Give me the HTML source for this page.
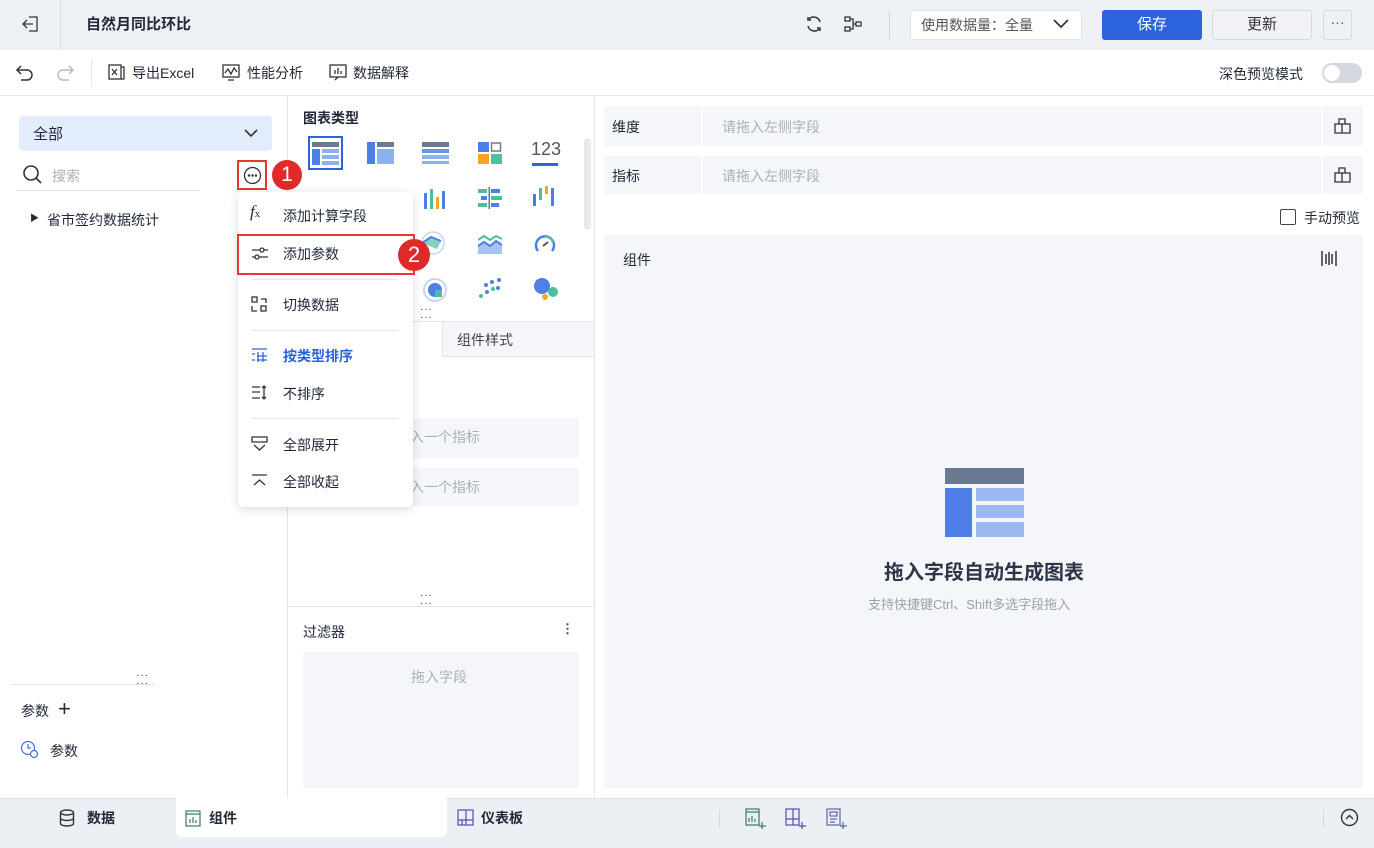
<!DOCTYPE html>
<html><head><meta charset="utf-8"><style>
*{box-sizing:border-box;margin:0;padding:0}
body{width:1374px;height:848px;position:relative;overflow:hidden;font-family:"Liberation Sans","Noto Sans CJK SC",sans-serif;font-size:14px;color:#222a3a;background:#fff}
.a{position:absolute}
.t{position:absolute;white-space:nowrap;margin-top:-2px}
svg{position:absolute}
</style></head><body>
<!-- top bar -->
<div class="a" style="left:0;top:0;width:1374px;height:50px;background:#edf0f5"></div>
<div class="a" style="left:60px;top:0;width:1px;height:50px;background:#d9dde4"></div>
<svg style="left:21px;top:14px" width="20" height="20" viewBox="0 0 20 20" fill="none" stroke="#333" stroke-width="1.3"><path d="M8 3h8v14H8M2 10h10M6 6l-4 4 4 4"/></svg>
<div class="t" style="left:86px;top:15px;font-size:15px;font-weight:bold">自然月同比环比</div>
<svg style="left:804px;top:14px" width="20" height="20" viewBox="0 0 20 20" fill="none" stroke="#333" stroke-width="1.5"><path d="M16 8a6.5 6.5 0 0 0-11-3M4 12a6.5 6.5 0 0 0 11 3"/><path d="M4 3v3h3M16 17v-3h-3"/></svg>
<svg style="left:843px;top:15px" width="20" height="18" viewBox="0 0 20 18" fill="none" stroke="#333" stroke-width="1.3"><rect x="2" y="2" width="5" height="4"/><rect x="2" y="12" width="5" height="4"/><rect x="13" y="7" width="5" height="4"/><path d="M7 4h3v10H7M10 9h3"/></svg>
<div class="a" style="left:889px;top:11px;width:1px;height:28px;background:#d0d4db"></div>
<div class="a" style="left:910px;top:10px;width:172px;height:30px;background:#fff;border:1px solid #dde1e8;border-radius:3px"></div>
<div class="t" style="left:921px;top:17px;color:#555;">使用数据量：全量</div>
<svg style="left:1052px;top:17px" width="18" height="14" viewBox="0 0 18 14" fill="none" stroke="#333" stroke-width="1.7"><path d="M2 3l7 7 7-7"/></svg>
<div class="a" style="left:1102px;top:10px;width:100px;height:30px;background:#2c63dc;border-radius:3px;color:#fff;text-align:center;line-height:30px;font-size:15px">保存</div>
<div class="a" style="left:1212px;top:10px;width:100px;height:30px;background:#f0f2f6;border:1px solid #d5d9e0;border-radius:3px;text-align:center;line-height:28px;font-size:15px;color:#333">更新</div>
<div class="a" style="left:1323px;top:10px;width:29px;height:30px;border:1px solid #d5d9e0;border-radius:3px;text-align:center;line-height:22px;color:#555">···</div>
<!-- toolbar -->
<div class="a" style="left:0;top:95px;width:1374px;height:1px;background:#e2e5ea"></div>
<svg style="left:15px;top:63px" width="20" height="18" viewBox="0 0 20 18" fill="none" stroke="#333" stroke-width="1.5"><path d="M6 3L2 7l4 4M2 7h10a5 5 0 0 1 0 10H6"/></svg>
<svg style="left:55px;top:63px" width="20" height="18" viewBox="0 0 20 18" fill="none" stroke="#bbb" stroke-width="1.5"><path d="M14 3l4 4-4 4M18 7H8a5 5 0 0 0 0 10h6"/></svg>
<div class="a" style="left:91px;top:60px;width:1px;height:26px;background:#e2e5ea"></div>
<svg style="left:108px;top:64px" width="17" height="17" viewBox="0 0 17 17" fill="none" stroke="#333" stroke-width="1.3"><rect x="1" y="1" width="12" height="14"/><path d="M4 5l5 6M9 5l-5 6M13 3h3v12h-3"/></svg>
<div class="t" style="left:132px;top:65px">导出Excel</div>
<svg style="left:222px;top:64px" width="18" height="17" viewBox="0 0 18 17" fill="none" stroke="#333" stroke-width="1.3"><rect x="1" y="1" width="16" height="12"/><path d="M3 9l3-4 3 5 3-6 3 4M6 16h6"/></svg>
<div class="t" style="left:247px;top:65px">性能分析</div>
<svg style="left:329px;top:64px" width="18" height="17" viewBox="0 0 18 17" fill="none" stroke="#333" stroke-width="1.3"><rect x="1" y="1" width="16" height="12"/><path d="M6 10V6M9 10V4M12 10V7M6 16l3-3"/></svg>
<div class="t" style="left:353px;top:65px">数据解释</div>
<div class="t" style="left:1219px;top:66px">深色预览模式</div>
<div class="a" style="left:1322px;top:63px;width:40px;height:20px;border-radius:10px;background:#d4d7dd"></div>
<div class="a" style="left:1324px;top:65px;width:16px;height:16px;border-radius:8px;background:#fff"></div>
<!-- panel dividers -->
<div class="a" style="left:287px;top:96px;width:1px;height:702px;background:#e2e5ea"></div>
<div class="a" style="left:594px;top:96px;width:1px;height:702px;background:#e2e5ea"></div>
<!-- left panel -->
<div class="a" style="left:19px;top:116px;width:253px;height:35px;background:#e3ecfb;border-radius:4px"></div>
<div class="t" style="left:33px;top:125px;font-size:15px">全部</div>
<svg style="left:242px;top:126px" width="18" height="14" viewBox="0 0 18 14" fill="none" stroke="#333" stroke-width="1.6"><path d="M3 4l6 6 6-6"/></svg>
<svg style="left:22px;top:164px" width="22" height="22" viewBox="0 0 22 22" fill="none" stroke="#333" stroke-width="1.6"><circle cx="9" cy="9" r="7"/><path d="M14 14l5 5"/></svg>
<div class="t" style="left:52px;top:168px;color:#aab0ba">搜索</div>
<div class="a" style="left:16px;top:190px;width:184px;height:1px;background:#dfe2e7"></div>
<div class="a" style="left:237px;top:160px;width:30px;height:30px;border:2px solid #e53935"></div>
<svg style="left:243px;top:166px" width="19" height="19" viewBox="0 0 19 19" fill="none" stroke="#333" stroke-width="1.3"><circle cx="9.5" cy="9.5" r="8"/><circle cx="6" cy="9.5" r=".6" fill="#333"/><circle cx="9.5" cy="9.5" r=".6" fill="#333"/><circle cx="13" cy="9.5" r=".6" fill="#333"/></svg>
<div class="a" style="left:272px;top:160px;width:30px;height:30px;border-radius:15px;background:#e02a2a;color:#fff;font-size:21px;text-align:center;line-height:30px">1</div>
<div class="t" style="left:30px;top:213px;font-size:9px">▶</div>
<div class="t" style="left:47px;top:212px">省市签约数据统计</div>
<div class="a" style="left:12px;top:684px;width:143px;height:1px;background:#dfe2e7"></div>
<div class="t" style="left:136px;top:672px;font-size:10px;letter-spacing:1px">···</div>
<div class="t" style="left:136px;top:680px;font-size:10px;letter-spacing:1px">···</div>
<div class="t" style="left:21px;top:703px">参数</div>
<div class="t" style="left:58px;top:698px;font-size:22px;font-weight:300">+</div>
<svg style="left:20px;top:740px" width="20" height="20" viewBox="0 0 20 20" fill="none" stroke="#4a6fd1" stroke-width="1.2"><circle cx="8" cy="8" r="6.5"/><path d="M8 4v4h3"/><circle cx="14" cy="14" r="3.5" fill="#fff"/></svg>
<div class="t" style="left:50px;top:743px">参数</div>
<!-- middle panel -->
<div class="t" style="left:303px;top:110px;font-weight:bold;font-size:14px">图表类型</div>
<div class="a" style="left:584px;top:138px;width:7px;height:92px;border-radius:4px;background:#e8eaee"></div>
<div class="a" style="left:308px;top:136px;width:35px;height:34px;border:2px solid #2c63dc"></div>
<svg style="left:312px;top:142px" width="27" height="24"><rect x="0" y="0" width="27" height="5" fill="#6b7a90"/><rect x="0" y="7" width="8" height="16" fill="#4e7fe6"/><rect x="10" y="7" width="17" height="4" fill="#8eb0f0"/><rect x="10" y="13" width="17" height="4" fill="#8eb0f0"/><rect x="10" y="19" width="17" height="4" fill="#8eb0f0"/></svg>
<svg style="left:367px;top:142px" width="27" height="22"><rect x="0" y="0" width="8" height="22" fill="#4e7fe6"/><rect x="10" y="0" width="17" height="5" fill="#6b7a90"/><rect x="10" y="7" width="17" height="15" fill="#8eb0f0"/></svg>
<svg style="left:422px;top:142px" width="27" height="22"><rect x="0" y="0" width="27" height="5" fill="#6b7a90"/><rect x="0" y="7" width="27" height="4" fill="#6a93ec"/><rect x="0" y="13" width="27" height="4" fill="#8eb0f0"/><rect x="0" y="19" width="27" height="3" fill="#8eb0f0"/></svg>
<svg style="left:478px;top:142px" width="24" height="22"><rect x="0" y="0" width="11" height="10" fill="#4e7fe6"/><rect x="13.5" y="1" width="9" height="8" fill="none" stroke="#6b7a90" stroke-width="1.5"/><rect x="0" y="12" width="11" height="10" fill="#f5a623"/><rect x="13" y="12" width="11" height="10" fill="#4cbf9f"/></svg>
<div class="t" style="left:531px;top:141px;font-size:18px;color:#555">123</div>
<div class="a" style="left:532px;top:163px;width:26px;height:3px;background:#2c63dc"></div>
<svg style="left:423px;top:187px" width="26" height="22"><rect x="1" y="6" width="3" height="16" fill="#4e7fe6"/><rect x="7" y="2" width="3" height="20" fill="#4cbf9f"/><rect x="13" y="10" width="3" height="12" fill="#f5a623"/><rect x="19" y="4" width="3" height="18" fill="#4e7fe6"/></svg>
<svg style="left:478px;top:187px" width="24" height="22"><rect x="0" y="2" width="9" height="4" fill="#4cbf9f"/><rect x="13" y="2" width="9" height="4" fill="#4e7fe6"/><rect x="3" y="9" width="6" height="4" fill="#4e7fe6"/><rect x="13" y="9" width="11" height="4" fill="#4cbf9f"/><rect x="0" y="16" width="9" height="4" fill="#4cbf9f"/><rect x="13" y="16" width="8" height="4" fill="#4e7fe6"/><rect x="10.5" y="0" width="1.5" height="22" fill="#6b7a90"/></svg>
<svg style="left:533px;top:186px" width="24" height="22"><rect x="0" y="8" width="3" height="12" fill="#4e7fe6"/><rect x="6" y="2" width="3" height="12" fill="#4cbf9f"/><rect x="12" y="0" width="3" height="8" fill="#f5a623"/><rect x="18" y="2" width="3" height="18" fill="#4e7fe6"/></svg>
<svg style="left:410px;top:230px" width="38" height="26" fill="none"><circle cx="23" cy="13" r="11" stroke="#c8d4ee" stroke-width="1.5"/><path d="M12 13l9-6 10 4-4 8z" fill="#4cbf9f" opacity=".7"/><path d="M12 13l9-6 10 4" stroke="#4e7fe6" stroke-width="2"/></svg>
<svg style="left:478px;top:232px" width="24" height="22"><path d="M0 8l6-4 6 4 6-4 6 3" fill="none" stroke="#4cbf9f" stroke-width="2"/><path d="M0 14l6-4 6 4 6-5 6 4v9H0z" fill="#a8c3f3"/><path d="M0 14l6-4 6 4 6-5 6 4" fill="none" stroke="#4e7fe6" stroke-width="2"/></svg>
<svg style="left:533px;top:232px" width="24" height="22" fill="none"><path d="M5 19A9 9 0 1 1 19 19" stroke="#4e7fe6" stroke-width="2.5"/><path d="M12 4a9 9 0 0 1 8 6" stroke="#4cbf9f" stroke-width="2.5"/><path d="M10 14l5-4" stroke="#555" stroke-width="2"/></svg>
<svg style="left:422px;top:277px" width="26" height="26" fill="none"><circle cx="13" cy="13" r="11" stroke="#c8d4ee" stroke-width="2"/><circle cx="13" cy="13" r="7" fill="#4e7fe6"/><path d="M13 13h7v7h-7z" fill="#4cbf9f"/></svg>
<svg style="left:478px;top:277px" width="24" height="22"><circle cx="3" cy="19" r="2" fill="#4cbf9f"/><circle cx="9" cy="15" r="2" fill="#4e7fe6"/><circle cx="15" cy="12" r="2" fill="#4cbf9f"/><circle cx="21" cy="3" r="2" fill="#4e7fe6"/><circle cx="8" cy="8" r="2" fill="#4e7fe6"/><circle cx="14" cy="5" r="2" fill="#4e7fe6"/><circle cx="20" cy="11" r="2" fill="#4e7fe6"/></svg>
<svg style="left:533px;top:277px" width="26" height="24"><circle cx="9" cy="9" r="8" fill="#4e7fe6"/><circle cx="20" cy="15" r="5" fill="#4cbf9f"/><circle cx="12" cy="20" r="3" fill="#f5a623"/></svg>
<div class="t" style="left:420px;top:306px;font-size:10px;letter-spacing:1px">···</div>
<div class="t" style="left:420px;top:314px;font-size:10px;letter-spacing:1px">···</div>
<div class="a" style="left:288px;top:321px;width:306px;height:1px;background:#e2e5ea"></div>
<div class="a" style="left:442px;top:322px;width:152px;height:35px;background:#f5f6f9;border-left:1px solid #e2e5ea;border-bottom:1px solid #e2e5ea"></div>
<div class="t" style="left:457px;top:332px;color:#444">组件样式</div>
<div class="a" style="left:300px;top:418px;width:279px;height:40px;background:#f5f6f9"></div>
<div class="t" style="left:410px;top:429px;color:#aab0ba">入一个指标</div>
<div class="a" style="left:300px;top:468px;width:279px;height:38px;background:#f5f6f9"></div>
<div class="t" style="left:410px;top:479px;color:#aab0ba">入一个指标</div>
<div class="a" style="left:288px;top:606px;width:306px;height:1px;background:#e2e5ea"></div>
<div class="t" style="left:420px;top:592px;font-size:10px;letter-spacing:1px">···</div>
<div class="t" style="left:420px;top:600px;font-size:10px;letter-spacing:1px">···</div>
<div class="t" style="left:303px;top:624px">过滤器</div>
<div class="t" style="left:561px;top:623px;font-size:13px;font-weight:bold;color:#444">⋮</div>
<div class="a" style="left:303px;top:652px;width:276px;height:136px;background:#f5f6f9"></div>
<div class="t" style="left:411px;top:669px;color:#aab0ba">拖入字段</div>
<!-- menu -->
<div class="a" style="left:238px;top:192px;width:175px;height:315px;background:#fff;border-radius:5px;box-shadow:0 2px 10px rgba(0,0,0,.15)"></div>
<div class="t" style="left:250px;top:204px;font-style:italic;font-family:'Liberation Serif',serif;font-size:17px">f<span style="font-size:11px;font-style:normal">x</span></div>
<div class="t" style="left:283px;top:208px">添加计算字段</div>
<div class="a" style="left:237px;top:234px;width:178px;height:41px;border:2px solid #e53935"></div>
<svg style="left:251px;top:245px" width="17" height="17" viewBox="0 0 17 17" fill="none" stroke="#333" stroke-width="1.3"><path d="M1 5h16M1 12h16"/><circle cx="11" cy="5" r="2" fill="#fff"/><circle cx="6" cy="12" r="2" fill="#fff"/></svg>
<div class="t" style="left:283px;top:246px">添加参数</div>
<div class="a" style="left:398px;top:239px;width:32px;height:32px;border-radius:16px;background:#e02a2a;color:#fff;font-size:22px;text-align:center;line-height:32px">2</div>
<div class="a" style="left:251px;top:279px;width:147px;height:1px;background:#e5e7eb"></div>
<svg style="left:251px;top:296px" width="17" height="17" viewBox="0 0 17 17" fill="none" stroke="#333" stroke-width="1.3"><rect x="1" y="1" width="5" height="5"/><rect x="10" y="10" width="5" height="5"/><path d="M10 3h5v4M1 10v5h5"/></svg>
<div class="t" style="left:283px;top:297px">切换数据</div>
<div class="a" style="left:251px;top:330px;width:147px;height:1px;background:#e5e7eb"></div>
<svg style="left:251px;top:347px" width="17" height="15" viewBox="0 0 17 15" fill="none" stroke="#2c63dc" stroke-width="1.3"><path d="M1 2h15M1 7h3M1 13h3M7 5v10M12 5v10M6 9h10M6 13h10"/></svg>
<div class="t" style="left:283px;top:348px;color:#2c63dc;font-weight:bold">按类型排序</div>
<svg style="left:251px;top:385px" width="17" height="15" viewBox="0 0 17 15" fill="none" stroke="#333" stroke-width="1.3"><path d="M1 2h8M1 7h8M1 13h8M13 1v13M11 3l2-2 2 2M11 12l2 2 2-2"/></svg>
<div class="t" style="left:283px;top:386px">不排序</div>
<div class="a" style="left:251px;top:418px;width:147px;height:1px;background:#e5e7eb"></div>
<svg style="left:251px;top:436px" width="17" height="16" viewBox="0 0 17 16" fill="none" stroke="#333" stroke-width="1.3"><path d="M1 1h15v5H1zM3 9l5.5 5L14 9"/></svg>
<div class="t" style="left:283px;top:437px">全部展开</div>
<svg style="left:251px;top:474px" width="17" height="14" viewBox="0 0 17 14" fill="none" stroke="#333" stroke-width="1.3"><path d="M1 1h15M3 11l5.5-5L14 11"/></svg>
<div class="t" style="left:283px;top:474px">全部收起</div>
<!-- right panel -->
<div class="a" style="left:604px;top:106px;width:97px;height:40px;background:#f5f6f9"></div>
<div class="a" style="left:703px;top:106px;width:618px;height:40px;background:#f5f6f9"></div>
<div class="a" style="left:1323px;top:106px;width:40px;height:40px;background:#f5f6f9"></div>
<div class="t" style="left:612px;top:119px">维度</div>
<div class="t" style="left:722px;top:119px;color:#aab0ba">请拖入左侧字段</div>
<div class="a" style="left:604px;top:156px;width:97px;height:38px;background:#f5f6f9"></div>
<div class="a" style="left:703px;top:156px;width:618px;height:38px;background:#f5f6f9"></div>
<div class="a" style="left:1323px;top:156px;width:40px;height:38px;background:#f5f6f9"></div>
<div class="t" style="left:612px;top:168px">指标</div>
<div class="t" style="left:722px;top:168px;color:#aab0ba">请拖入左侧字段</div>
<svg style="left:1334px;top:117px" width="17" height="17" viewBox="0 0 17 17" fill="none" stroke="#333" stroke-width="1.3"><path d="M1 7h15v9H1zM5 7V2h6v5M8 7v9"/></svg>
<svg style="left:1334px;top:166px" width="17" height="17" viewBox="0 0 17 17" fill="none" stroke="#333" stroke-width="1.3"><path d="M1 7h15v9H1zM5 7V2h6v5M8 7v9"/></svg>
<div class="a" style="left:1280px;top:209px;width:16px;height:16px;border:1px solid #444;border-radius:2px"></div>
<div class="t" style="left:1304px;top:210px">手动预览</div>
<div class="a" style="left:604px;top:235px;width:759px;height:553px;background:#f5f6fa"></div>
<div class="t" style="left:623px;top:252px">组件</div>
<svg style="left:1321px;top:250px" width="16" height="17" viewBox="0 0 16 17" stroke="#333" stroke-width="1.5"><path d="M1 1v15M15 1v15M5 4v10M11 4v10M8 2v13"/></svg>
<svg style="left:945px;top:468px" width="79" height="70"><rect x="0" y="0" width="79" height="16" fill="#6b7a90"/><rect x="0" y="20" width="27" height="49" fill="#4e7fe6"/><rect x="31" y="20" width="48" height="13" fill="#9bb8f2"/><rect x="31" y="37" width="48" height="13" fill="#9bb8f2"/><rect x="31" y="54" width="48" height="15" fill="#9bb8f2"/></svg>
<div class="t" style="left:884px;top:558px;font-size:20px;font-weight:bold;color:#2d3548">拖入字段自动生成图表</div>
<div class="t" style="left:868px;top:596px;font-size:13px;color:#9aa1ad">支持快捷键Ctrl、Shift多选字段拖入</div>
<!-- bottom bar -->
<div class="a" style="left:0;top:798px;width:1374px;height:50px;background:#eceff4;border-top:1px solid #dfe2e7"></div>
<div class="a" style="left:176px;top:798px;width:271px;height:39px;background:#fff;border-radius:0 0 5px 5px"></div>
<svg style="left:59px;top:809px" width="16" height="18" viewBox="0 0 16 18" fill="none" stroke="#333" stroke-width="1.4"><ellipse cx="8" cy="3.5" rx="6.5" ry="2.5"/><path d="M1.5 3.5v11c0 1.4 2.9 2.5 6.5 2.5s6.5-1.1 6.5-2.5v-11M1.5 9c0 1.4 2.9 2.5 6.5 2.5s6.5-1.1 6.5-2.5"/></svg>
<div class="t" style="left:87px;top:810px;font-weight:bold">数据</div>
<svg style="left:185px;top:810px" width="16" height="17" viewBox="0 0 16 17" fill="none" stroke="#3e7a6b" stroke-width="1.2"><rect x="1" y="1" width="14" height="15"/><path d="M1 4h14M5 13V9M8 13V7M11 13v-3"/></svg>
<div class="t" style="left:209px;top:810px;font-weight:bold">组件</div>
<svg style="left:457px;top:809px" width="17" height="17" viewBox="0 0 17 17" fill="none" stroke="#5a4ab0" stroke-width="1.2"><rect x="1" y="1" width="15" height="15"/><path d="M9 1v15M1 11h15M5 11v5"/></svg>
<div class="t" style="left:481px;top:810px;font-weight:bold">仪表板</div>
<div class="a" style="left:719px;top:810px;width:1px;height:18px;background:#d3d7de"></div>
<svg style="left:745px;top:808px" width="22" height="22" viewBox="0 0 22 22" fill="none" stroke="#3e7a6b" stroke-width="1.2"><rect x="1" y="1" width="13" height="16"/><path d="M1 4h13M4 14v-4M7 14V8M10 14v-3M17 14v7M14 18h7"/></svg>
<svg style="left:785px;top:808px" width="22" height="22" viewBox="0 0 22 22" fill="none" stroke="#5a4ab0" stroke-width="1.2"><rect x="1" y="1" width="13" height="16"/><path d="M8 1v16M1 11h13M17 14v7M14 18h7"/></svg>
<svg style="left:826px;top:808px" width="22" height="22" viewBox="0 0 22 22" fill="none" stroke="#5a6aa0" stroke-width="1.2"><rect x="1" y="1" width="13" height="16"/><rect x="4" y="4" width="7" height="4"/><path d="M4 11h7M4 14h5M17 14v7M14 18h7"/></svg>
<div class="a" style="left:1323px;top:810px;width:1px;height:18px;background:#d3d7de"></div>
<svg style="left:1340px;top:808px" width="19" height="19" viewBox="0 0 19 19" fill="none" stroke="#333" stroke-width="1.4"><circle cx="9.5" cy="9.5" r="8"/><path d="M6 11l3.5-3.5L13 11"/></svg>
</body></html>
